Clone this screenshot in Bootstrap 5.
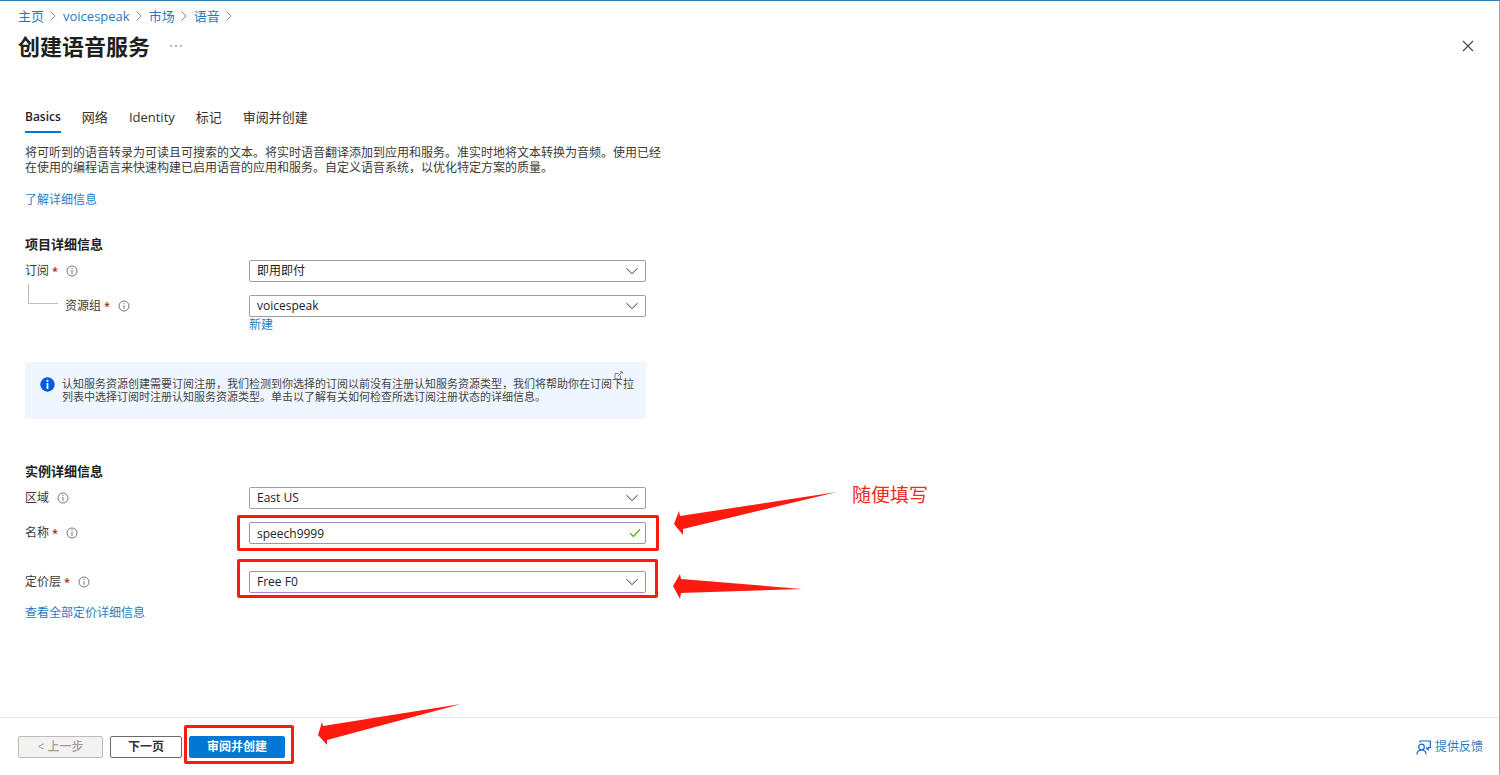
<!DOCTYPE html>
<html lang="zh-CN">
<head>
<meta charset="utf-8">
<meta name="viewport" content="width=device-width, initial-scale=1">
<title>创建语音服务</title>
<link href="https://cdn.jsdelivr.net/npm/bootstrap@5.3.0/dist/css/bootstrap.min.css" rel="stylesheet">
<style>
  :root { --link: #1f7cc4; --ink: #3b3a39; --mark-red: #ff1a10; }
  body { font-family: "Open Sans", "Noto Sans CJK SC", sans-serif; font-size: 12px; line-height: 16px; color: var(--ink); background: #fff; border-top: 1px solid #2f7eb0; border-right: 1px solid #a6a6a6; }
  a { color: var(--link); text-decoration: none; }
  a:hover { text-decoration: underline; }
  svg { display: block; flex: none; }
  .page-head { padding: 6px 18px 0; }
  .crumbs { font-size: 13px; line-height: 18px; --bs-breadcrumb-margin-bottom: 0; }
  .crumbs li { display: flex; align-items: center; gap: 6px; margin-right: 7px; }
  .title-row { margin-top: 6px; gap: 20px; padding-right: 7px; }
  .page-title { font-size: 22px; line-height: 30px; font-weight: 700; color: #1f1f1f; }
  .bare { border: 0; background: none; padding: 0; color: #444; }
  .page-body { padding: 47px 25px 0; }
  .form-area { max-width: 621px; }
  .tabs { gap: 21px; --bs-nav-link-color: #323130; --bs-nav-link-hover-color: #0078d4; }
  .tabs .nav-link { padding: 0 0 5px; font-size: 13px; line-height: 18px; border-bottom: 2px solid transparent; }
  .tabs .nav-link.active { font-size: 12px; font-weight: 600; color: #1f1f1f; border-color: #0078d4; }
  .intro { margin-top: 12px; line-height: 15px; white-space: nowrap; }
  .learn { margin-top: 17px; }
  .section-title { font-size: 13px; line-height: 18px; font-weight: 700; color: #222; margin: 0 0 7px; }
  .section-project { margin-top: 27px; }
  .section-instance { margin-top: 43px; }
  .field { display: flex; min-height: 22px; }
  .field-next { margin-top: 13px; }
  .field-far { margin-top: 27px; }
  .field-name { flex: 0 0 224px; display: flex; align-items: center; height: 22px; }
  .field-name label { margin-right: 8px; }
  .req { color: #a4262c; margin-left: 3px; font-size: 11px; font-weight: 600; }
  .field-box { flex: 1 1 auto; min-width: 0; position: relative; }
  .ctl { height: 22px; min-height: 22px; padding: 0 24px 0 7px; font-size: 12px; line-height: 20px; color: #222; border: 1px solid #a19f9d; border-radius: 2px; background-color: #fff; }
  select.ctl { background-position: right 7px center; background-size: 12px 12px;
    background-image: url("data:image/svg+xml,%3csvg xmlns='http://www.w3.org/2000/svg' viewBox='0 0 12 12'%3e%3cpath d='M.5 3.2 6 8.7l5.500-5.500' fill='none' stroke='%23333'/%3e%3c/svg%3e"); }
  .ctl.edited { border-color: #b184c4; }
  .valid-tick { position: absolute; right: 5px; top: 6px; }
  .branch { width: 30px; height: 20px; border-left: 1px solid #bebbb8; border-bottom: 1px solid #bebbb8; margin: 0 7px 24px 3px; }
  .notice { position: relative; margin-top: 29px; padding: 15px 15px 16px 15px; background: #eff6ff; color: #444; font-size: 11px; line-height: 13px; gap: 7px; white-space: nowrap; }
  .notice .ext { position: absolute; right: 23px; top: 9px; }
  .pricing { margin-top: 12px; }
  /* review marks laid over the controls */
  .frame { position: absolute; border: 3px solid var(--mark-red); border-radius: 2px; pointer-events: none; }
  .frame-name { inset: -7px -13px -7px -12px; }
  .frame-tier { inset: -12px -12px -5px -12px; }
  .frame-go { inset: -11px -9px -6px -5px; }
  .arrow { position: absolute; pointer-events: none; fill: var(--mark-red); }
  .arrow-name { left: calc(100% + 28px); top: -30px; }
  .arrow-tier { left: calc(100% + 27px); top: 3px; }
  .arrow-go { left: calc(100% + 33px); top: -32px; }
  .note { position: absolute; left: calc(100% + 206px); top: -40px; font-size: 19px; line-height: 26px; color: #f02c20; white-space: nowrap; }
  .foot { border-top: 1px solid #e6e6e6; padding: 18px 16px 17px 18px; gap: 7px; }
  .foot .btn { font-size: 12px; line-height: 20px; height: 22px; padding: 0; border-radius: 2px; font-weight: 700; }
  .foot .btn-prev { width: 85px; background: #f3f2f1; border-color: #bdbbb9; color: #a19f9d; opacity: 1; font-weight: 500; }
  .btn-next { width: 72px; border-color: #6b6a69; color: #323130; }
  .btn-go { width: 96px; background: #0078d4; border-color: #0078d4; color: #fff; }
</style>
</head>
<body class="d-flex flex-column min-vh-100">
<svg width="0" height="0" class="position-absolute" aria-hidden="true">
  <symbol id="info" viewBox="0 0 12 12"><circle cx="6" cy="6" r="5" fill="none" stroke="#797775"/><path d="M6 5v4M6 3v1" stroke="#797775"/></symbol>
  <symbol id="sep" viewBox="0 0 6 10"><path d="M.5.5 5 5 .5 9.500" fill="none" stroke="#888"/></symbol>
</svg>

<header class="page-head">
  <nav aria-label="breadcrumb">
    <ol class="breadcrumb crumbs">
      <li><a href="#">主页</a><svg width="6" height="10"><use href="#sep"/></svg></li>
      <li><a href="#">voicespeak</a><svg width="6" height="10"><use href="#sep"/></svg></li>
      <li><a href="#">市场</a><svg width="6" height="10"><use href="#sep"/></svg></li>
      <li><a href="#">语音</a><svg width="6" height="10"><use href="#sep"/></svg></li>
    </ol>
  </nav>
  <div class="title-row d-flex align-items-center">
    <h1 class="page-title mb-0">创建语音服务</h1>
    <button type="button" class="bare" aria-label="更多"><svg width="12" height="4" viewBox="0 0 12 4" fill="#555"><circle cx="1" cy="2" r=".8"/><circle cx="6" cy="2" r=".8"/><circle cx="11" cy="2" r=".8"/></svg></button>
    <button type="button" class="bare ms-auto" aria-label="关闭"><svg width="12" height="12" viewBox="0 0 12 12"><path d="m1 1 10 10M11 1 1 11" stroke="#444" stroke-width="1.100"/></svg></button>
  </div>
</header>

<main class="page-body">
  <div class="form-area">
    <nav class="nav tabs">
      <a class="nav-link active" href="#" aria-current="page">Basics</a>
      <a class="nav-link" href="#">网络</a>
      <a class="nav-link" href="#">Identity</a>
      <a class="nav-link" href="#">标记</a>
      <a class="nav-link" href="#">审阅并创建</a>
    </nav>

    <p class="intro mb-0">将可听到的语音转录为可读且可搜索的文本。将实时语音翻译添加到应用和服务。准实时地将文本转换为音频。使用已经<br>在使用的编程语言来快速构建已启用语音的应用和服务。自定义语音系统，以优化特定方案的质量。</p>
    <p class="learn mb-0"><a href="#">了解详细信息</a></p>

    <h2 class="section-title section-project">项目详细信息</h2>
    <div class="field">
      <div class="field-name"><label for="sub">订阅<span class="req">*</span></label><svg width="12" height="12"><use href="#info"/></svg></div>
      <div class="field-box"><select id="sub" class="form-select ctl"><option>即用即付</option></select></div>
    </div>
    <div class="field field-next">
      <div class="field-name"><span class="branch"></span><label for="group">资源组<span class="req">*</span></label><svg width="12" height="12"><use href="#info"/></svg></div>
      <div class="field-box"><select id="group" class="form-select ctl"><option>voicespeak</option></select><a href="#" class="d-block">新建</a></div>
    </div>

    <div class="notice d-flex">
      <svg width="15" height="15" viewBox="0 0 15 15"><circle cx="7.500" cy="7.500" r="7.200" fill="#015cda"/><circle cx="7.500" cy="3.900" r="1.100" fill="#fff"/><path d="M7.500 6v6" stroke="#fff" stroke-width="1.800"/></svg>
      <div>认知服务资源创建需要订阅注册，我们检测到你选择的订阅以前没有注册认知服务资源类型，我们将帮助你在订阅下拉<br>列表中选择订阅时注册认知服务资源类型。单击以了解有关如何检查所选订阅注册状态的详细信息。</div>
      <a href="#" class="ext" aria-label="在新窗口中打开"><svg width="9" height="9" viewBox="0 0 9 9" fill="none" stroke="#666" stroke-width=".8"><path d="M4.500 2.500H1v5.500h5.500V4.500M3.800 5.200 8.200.8M5.800.8h2.400v2.400"/></svg></a>
    </div>

    <h2 class="section-title section-instance">实例详细信息</h2>
    <div class="field">
      <div class="field-name"><label for="region">区域</label><svg width="12" height="12"><use href="#info"/></svg></div>
      <div class="field-box"><select id="region" class="form-select ctl"><option>East US</option></select></div>
    </div>
    <div class="field field-next">
      <div class="field-name"><label for="name">名称<span class="req">*</span></label><svg width="12" height="12"><use href="#info"/></svg></div>
      <div class="field-box">
        <input id="name" type="text" class="form-control ctl edited" value="speech9999">
        <svg class="valid-tick" width="12" height="10" viewBox="0 0 12 10"><path d="m1 5.200 3.300 3.300L11 1.500" fill="none" stroke="#57a300" stroke-width="1.200"/></svg>
        <span class="frame frame-name"></span>
        <svg class="arrow arrow-name" width="163" height="43" viewBox="0 0 163 43"><path d="M0 32 5 19l1 5L163 0 9 37v6z"/></svg>
        <span class="note">随便填写</span>
      </div>
    </div>
    <div class="field field-far">
      <div class="field-name"><label for="tier">定价层<span class="req">*</span></label><svg width="12" height="12"><use href="#info"/></svg></div>
      <div class="field-box">
        <select id="tier" class="form-select ctl edited"><option>Free F0</option></select>
        <span class="frame frame-tier"></span>
        <svg class="arrow arrow-tier" width="129" height="25" viewBox="0 0 129 25"><path d="M0 12 7 0l1 5 121 10L8 19l-1 6z"/></svg>
      </div>
    </div>
    <p class="pricing mb-4"><a href="#">查看全部定价详细信息</a></p>
  </div>
</main>

<footer class="foot mt-auto d-flex align-items-center">
  <button type="button" class="btn btn-prev" disabled>&lt; 上一步</button>
  <button type="button" class="btn btn-next">下一页</button>
  <div class="position-relative">
    <button type="button" class="btn btn-go d-block">审阅并创建</button>
    <span class="frame frame-go"></span>
    <svg class="arrow arrow-go" width="143" height="41" viewBox="0 0 143 41"><path d="M0 31 4 18l1 4L143 0 9 36v5z"/></svg>
  </div>
  <a href="#" class="ms-auto d-flex align-items-center gap-1"><svg width="15" height="15" viewBox="0 0 15 15" fill="none" stroke="#1668c7" stroke-width="1.200"><circle cx="5.500" cy="7" r="2.800"/><path d="M.8 14.500c.4-3 2.300-4.700 4.700-4.700s4.300 1.700 4.700 4.700M4 2.500V1h10.300v6.500h-2.100v2.200L9.800 7.500"/></svg>提供反馈</a>
</footer>
<script src="https://cdn.jsdelivr.net/npm/bootstrap@5.3.0/dist/js/bootstrap.bundle.min.js"></script>
</body>
</html>
